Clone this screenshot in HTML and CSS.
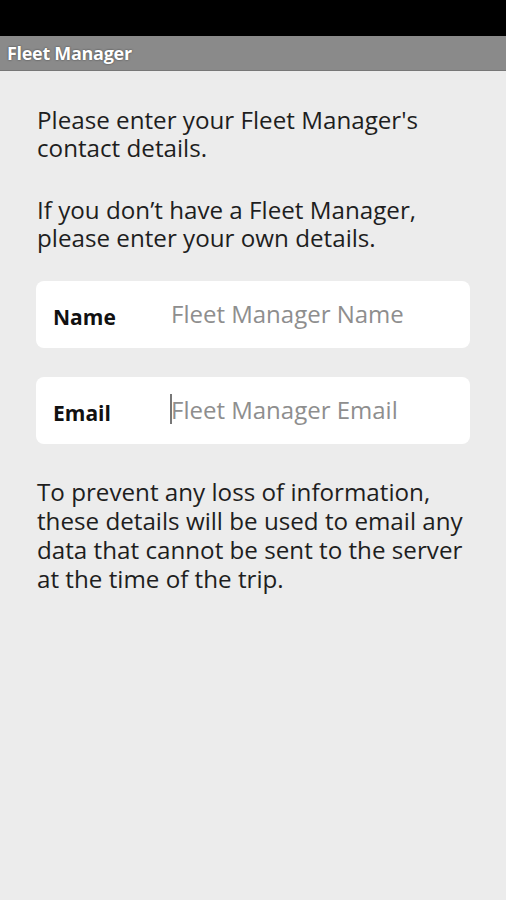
FILE: index.html
```html
<!DOCTYPE html>
<html lang="en">
<head>
    <meta charset="UTF-8">
    <meta name="viewport" content="width=device-width, initial-scale=1.0">
    <title>Fleet Manager</title>
    <link rel="stylesheet" href="styles.css">
</head>
<body>

    <div class="status-bar"></div>

    <header class="title-bar">
        <h1>Fleet Manager</h1>
    </header>

    <main>
        <p class="intro">Please enter your Fleet Manager's<br>contact details.</p>
        <p class="intro">If you don’t have a Fleet Manager,<br>please enter your own details.</p>

        <div class="field">
            <label for="fm-name">Name</label>
            <input type="text" id="fm-name" placeholder="Fleet Manager Name">
        </div>

        <div class="field">
            <label for="fm-email">Email</label>
            <span class="caret"></span>
            <input type="email" id="fm-email" placeholder="Fleet Manager Email">
        </div>

        <p class="note">To prevent any loss of information,<br>these details will be used to email any<br>data that cannot be sent to the server<br>at the time of the trip.</p>
    </main>

</body>
</html>
```

FILE: styles.css
```css
body {
    margin: 0;
    font-family: "Open Sans", "Noto Sans", sans-serif;
    background-color: #ececec;
    color: #1e1e1e;
    min-height: 900px;
}

.status-bar {
    height: 36px;
    background-color: #000;
}

.title-bar {
    height: 34px;
    background-color: #8a8a8a;
    border-bottom: 1px solid #777;
    display: flex;
    align-items: center;
    padding-left: 7px;
}

.title-bar h1 {
    margin: 0;
    font-size: 18px;
    font-weight: bold;
    color: #fff;
    text-shadow: 0 0 2px rgba(0, 0, 0, 0.6);
    letter-spacing: -0.3px;
}

main {
    width: 434px;
    padding: 35px 0 0 36px;
}

.intro {
    margin: 0 0 34px;
    padding-left: 1px;
    font-size: 24.2px;
    line-height: 28px;
    white-space: nowrap;
}

.intro + .intro {
    margin-bottom: 29px;
}

.field {
    background-color: #fff;
    border-radius: 8px;
    height: 67px;
    display: flex;
    align-items: center;
    margin-bottom: 29px;
    position: relative;
}

.field label {
    width: 118px;
    padding-left: 17px;
    font-size: 21px;
    font-weight: bold;
    color: #111;
    padding-top: 4px;
}

.field input {
    flex: 1;
    min-width: 0;
    border: none;
    outline: none;
    background: transparent;
    font-family: inherit;
    font-size: 24px;
    color: #333;
    padding: 0 0 2px;
}

.field input::placeholder {
    color: #8e8e8e;
}

.caret {
    position: absolute;
    left: 134px;
    top: 17px;
    width: 2px;
    height: 30px;
    background-color: #777;
}

.note {
    margin: 0;
    padding: 4px 0 0 1px;
    font-size: 24.2px;
    line-height: 29px;
    white-space: nowrap;
}
```
